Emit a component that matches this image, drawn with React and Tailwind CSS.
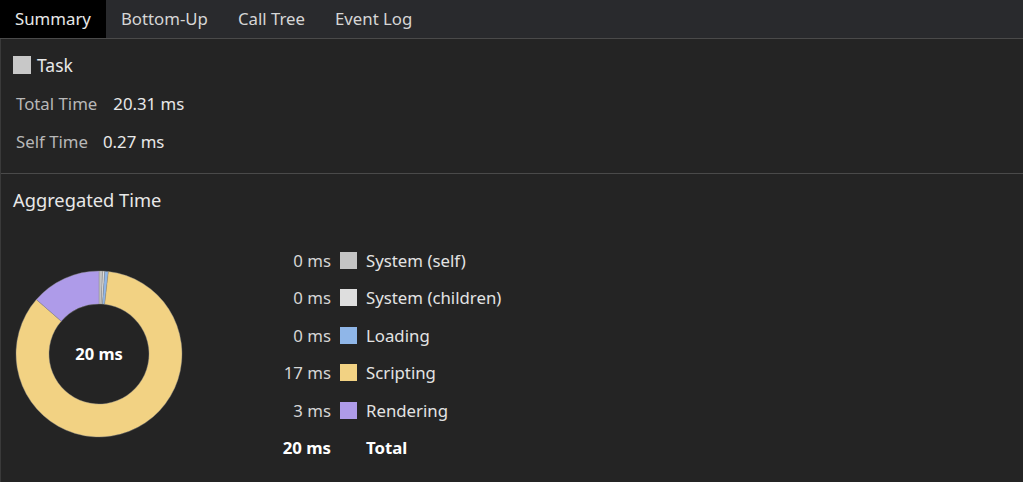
import React from "react";

const slices = [
  { name: "System (self)", value: "0 ms", color: "#c4c4c4", from: 0, to: 2.5 },
  { name: "System (children)", value: "0 ms", color: "#dedede", from: 2.5, to: 4 },
  { name: "Loading", value: "0 ms", color: "#8fb6e8", from: 4, to: 6.5 },
  { name: "Scripting", value: "17 ms", color: "#f2d283", from: 6.5, to: 311 },
  { name: "Rendering", value: "3 ms", color: "#ae9be9", from: 311, to: 360 },
];

const polar = (cx, cy, r, deg) => {
  const a = ((deg - 90) * Math.PI) / 180;
  return [cx + r * Math.cos(a), cy + r * Math.sin(a)];
};

const arcPath = (cx, cy, ro, ri, a0, a1) => {
  const large = a1 - a0 > 180 ? 1 : 0;
  const [x0, y0] = polar(cx, cy, ro, a0);
  const [x1, y1] = polar(cx, cy, ro, a1);
  const [x2, y2] = polar(cx, cy, ri, a1);
  const [x3, y3] = polar(cx, cy, ri, a0);
  return `M${x0} ${y0} A${ro} ${ro} 0 ${large} 1 ${x1} ${y1} L${x2} ${y2} A${ri} ${ri} 0 ${large} 0 ${x3} ${y3} Z`;
};

const Donut = () => (
  <div className="relative w-[168px] h-[168px] ml-[2px]">
    <svg width="168" height="168" viewBox="0 0 168 168">
      {slices.map((s) => (
        <path
          key={s.name}
          d={arcPath(84, 84, 83, 50, s.from, s.to - 0.001)}
          fill={s.color}
          stroke="#8a8a8a"
          strokeWidth="0.4"
        />
      ))}
    </svg>
    <div className="absolute inset-0 flex items-center justify-center text-[16.5px] font-bold text-white">
      20 ms
    </div>
  </div>
);

const tabs = ["Summary", "Bottom-Up", "Call Tree", "Event Log"];

export default function App() {
  return (
    <div
      className="w-full h-[482px] bg-[#242424] text-[#e3e3e3] overflow-hidden"
      style={{ fontFamily: '"Noto Sans", "Open Sans", sans-serif' }}
    >
      <div className="flex h-[39px] bg-[#292a2d] border-b border-[#4a4a4a]">
        {tabs.map((t, i) => (
          <div
            key={t}
            className={`px-[15px] flex items-center text-[16.8px] ${
              i === 0 ? "bg-black text-[#e8e8e8]" : "text-[#d6d6d6]"
            }`}
          >
            {t}
          </div>
        ))}
      </div>

      <div className="border-l border-[#3a3a3a] h-[443px]">
        <div className="pt-[13px] pb-[12px] border-b border-[#4a4a4a]">
          <div className="h-[26px] flex items-center pl-[12px] gap-[6px]">
            <span className="w-[18px] h-[18px] bg-[#c8c8c8]" />
            <span className="text-[17.5px] text-[#e8e8e8]">Task</span>
          </div>
          <div className="mt-[7px] pl-[15px]">
            <div className="h-[38px] flex items-center gap-[16px] text-[16.8px]">
              <span className="text-[#b8b8b8]">Total Time</span>
              <span className="text-[#e8e8e8]">20.31 ms</span>
            </div>
            <div className="h-[38px] flex items-center gap-[15px] text-[16.8px]">
              <span className="text-[#b8b8b8]">Self Time</span>
              <span className="text-[#e8e8e8]">0.27 ms</span>
            </div>
          </div>
        </div>

        <div className="pl-[12px] pt-[13px]">
          <div className="h-[26px] flex items-center text-[18.3px] text-[#e8e8e8]">
            Aggregated Time
          </div>
          <div className="mt-[16px] h-[250px] flex items-center">
            <Donut />
            <div className="ml-[48px] flex flex-col text-[16.8px]">
              {slices.map((s) => (
                <div key={s.name} className="h-[37.5px] flex items-center">
                  <span className="w-[100px] text-right text-[#d6d6d6]">{s.value}</span>
                  <span
                    className="ml-[9px] w-[17px] h-[17px]"
                    style={{ backgroundColor: s.color }}
                  />
                  <span className="ml-[9px] text-[#e3e3e3]">{s.name}</span>
                </div>
              ))}
              <div className="h-[37.5px] flex items-center font-bold text-white">
                <span className="w-[100px] text-right">20 ms</span>
                <span className="ml-[35px]">Total</span>
              </div>
            </div>
          </div>
        </div>
      </div>
    </div>
  );
}
